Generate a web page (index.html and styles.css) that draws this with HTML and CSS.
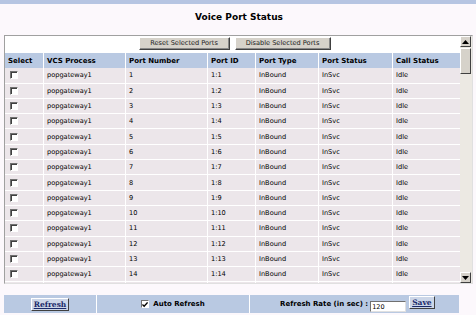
FILE: index.html
```html
<!DOCTYPE html>
<html>
<head>
<meta charset="utf-8">
<link rel="stylesheet" href="styles.css">
</head>
<body>
<div class="topbar"></div>
<h1 class="title">Voice Port Status</h1>
<div class="frame">
  <div class="content">
    <div class="btnrow">
      <button class="btn">Reset Selected Ports</button>
      <button class="btn">Disable Selected Ports</button>
    </div>
    <div class="grid" id="grid">
      <div class="hd">Select</div><div class="hd">VCS Process</div><div class="hd">Port Number</div><div class="hd">Port ID</div><div class="hd">Port Type</div><div class="hd">Port Status</div><div class="hd">Call Status</div>
      <div class="cb"><span class="box"></span></div><div>popgateway1</div><div>1</div><div>1:1</div><div>InBound</div><div>InSvc</div><div>Idle</div>
      <div class="cb"><span class="box"></span></div><div>popgateway1</div><div>2</div><div>1:2</div><div>InBound</div><div>InSvc</div><div>Idle</div>
      <div class="cb"><span class="box"></span></div><div>popgateway1</div><div>3</div><div>1:3</div><div>InBound</div><div>InSvc</div><div>Idle</div>
      <div class="cb"><span class="box"></span></div><div>popgateway1</div><div>4</div><div>1:4</div><div>InBound</div><div>InSvc</div><div>Idle</div>
      <div class="cb"><span class="box"></span></div><div>popgateway1</div><div>5</div><div>1:5</div><div>InBound</div><div>InSvc</div><div>Idle</div>
      <div class="cb"><span class="box"></span></div><div>popgateway1</div><div>6</div><div>1:6</div><div>InBound</div><div>InSvc</div><div>Idle</div>
      <div class="cb"><span class="box"></span></div><div>popgateway1</div><div>7</div><div>1:7</div><div>InBound</div><div>InSvc</div><div>Idle</div>
      <div class="cb"><span class="box"></span></div><div>popgateway1</div><div>8</div><div>1:8</div><div>InBound</div><div>InSvc</div><div>Idle</div>
      <div class="cb"><span class="box"></span></div><div>popgateway1</div><div>9</div><div>1:9</div><div>InBound</div><div>InSvc</div><div>Idle</div>
      <div class="cb"><span class="box"></span></div><div>popgateway1</div><div>10</div><div>1:10</div><div>InBound</div><div>InSvc</div><div>Idle</div>
      <div class="cb"><span class="box"></span></div><div>popgateway1</div><div>11</div><div>1:11</div><div>InBound</div><div>InSvc</div><div>Idle</div>
      <div class="cb"><span class="box"></span></div><div>popgateway1</div><div>12</div><div>1:12</div><div>InBound</div><div>InSvc</div><div>Idle</div>
      <div class="cb"><span class="box"></span></div><div>popgateway1</div><div>13</div><div>1:13</div><div>InBound</div><div>InSvc</div><div>Idle</div>
      <div class="cb"><span class="box"></span></div><div>popgateway1</div><div>14</div><div>1:14</div><div>InBound</div><div>InSvc</div><div>Idle</div>
      <div></div><div></div><div></div><div></div><div></div><div></div><div></div>
    </div>
  </div>
  <div class="scrollbar">
    <div class="arrow up"><svg width="7" height="4" viewBox="0 0 7 4"><path d="M3.5 0 L7 4 L0 4 Z" fill="#000"/></svg></div>
    <div class="track"><div class="thumb"></div></div>
    <div class="arrow down"><svg width="7" height="4" viewBox="0 0 7 4"><path d="M0 0 L7 0 L3.5 4 Z" fill="#000"/></svg></div>
  </div>
</div>
<div class="bottombar">
  <div class="bcell"><span class="linkbtn">Refresh</span></div>
  <div class="bcell"><span class="chk"><svg width="7" height="7" viewBox="0 0 7 7"><path d="M0.5 3.5 L2.5 5.5 L6.5 1" stroke="#000" stroke-width="1.6" fill="none"/></svg></span>Auto Refresh</div>
  <div class="bcell"><span>Refresh Rate (in sec) :</span><span class="input">120</span><span class="linkbtn save">Save</span></div>
</div>
</body>
</html>
```
FILE: styles.css
```css
html, body {
  margin: 0;
  padding: 0;
}
body {
  background: #fcf8fc;
  font-family: "DejaVu Sans", Verdana, sans-serif;
  width: 476px;
  height: 315px;
  overflow: hidden;
}
.topbar {
  height: 4px;
  background: #b6c5e2;
}
.title {
  margin: 8px 0 0 0;
  height: 11px;
  line-height: 11px;
  font-size: 9px;
  font-weight: bold;
  text-align: center;
  color: #000;
  padding-left: 2px;
}
.frame {
  margin: 12px 3px 0 4px;
  height: 247px;
  border: 1px solid #a0a0a0;
  border-right-color: #e0e0e0;
  border-bottom-color: #e0e0e0;
  display: flex;
  background: #fff;
}
.content {
  flex: 1;
  overflow: hidden;
  background: #fff;
  opacity: 0.999;
}
.btnrow {
  height: 15px;
  padding-top: 1px;
  display: flex;
  justify-content: center;
  gap: 5px;
  padding-left: 4px;
}
.btn {
  margin: 0;
  height: 13px;
  padding: 0 6px;
  font-family: "DejaVu Sans", Tahoma, sans-serif;
  font-size: 6.6px;
  line-height: 11px;
  color: #222;
  background: #d6d2ca;
  border: 1px solid;
  border-color: #fff #404040 #404040 #fff;
  box-shadow: inset -1px -1px 0 #888;
}
.btn:first-child {
  width: 91px;
}
.btn:last-child {
  width: 96px;
}
.grid {
  margin-top: 1px;
  display: grid;
  grid-template-columns: 38px 81px 81px 47px 62px 73px 1fr;
  grid-auto-rows: 14.3px;
  gap: 1px;
  background: #fff;
  font-size: 6.6px;
  color: #000;
}
.grid > div {
  background: #ece6ea;
  padding-left: 3px;
  display: flex;
  align-items: center;
  white-space: nowrap;
  overflow: hidden;
}
.grid > .hd {
  background: #b9c9e2;
  font-weight: bold;
  font-size: 7px;
  padding-left: 3px;
  height: 15.3px;
  align-self: start;
}
.grid > .cb {
  padding-left: 5px;
}
.box {
  width: 8px;
  height: 8px;
  box-sizing: border-box;
  border: 1px solid;
  border-color: #707070 #fff #fff #707070;
  background: #fff;
  box-shadow: inset 1px 1px 0 #404040;
}
.scrollbar {
  width: 12px;
  background: #ece9e3;
  display: flex;
  flex-direction: column;
}
.arrow {
  height: 11px;
  width: 11px;
  box-sizing: border-box;
  background: #d6d2ca;
  border: 1px solid;
  border-color: #fff #404040 #404040 #fff;
  display: flex;
  align-items: center;
  justify-content: center;
}
.track {
  flex: 1;
}
.thumb {
  margin-top: 1px;
  height: 26px;
  width: 11px;
  box-sizing: border-box;
  background: #d6d2ca;
  border: 1px solid;
  border-color: #fff #404040 #404040 #fff;
}
.bottombar {
  margin: 11px 0 0 4px;
  width: 455px;
  height: 18px;
  display: grid;
  grid-template-columns: 92px 152px 1fr;
  gap: 1px;
  background: #fff;
  font-size: 7px;
  font-weight: bold;
  opacity: 0.999;
}
.bcell {
  background: #b9c9e2;
  display: flex;
  align-items: center;
  justify-content: center;
}
.bcell:last-child {
  justify-content: flex-start;
  padding-left: 30px;
}
.linkbtn {
  text-decoration: underline;
  border: 1px solid;
  border-color: #fff #404040 #404040 #fff;
  background: #ccd6e8;
  padding: 1px 2px;
  color: #1a2a6a;
  font-family: "DejaVu Serif", serif;
  font-size: 7.5px;
}
.chk {
  width: 8px;
  height: 8px;
  box-sizing: border-box;
  border: 1px solid;
  border-color: #707070 #fff #fff #707070;
  background: #fff;
  margin-right: 4px;
  display: flex;
  align-items: center;
  justify-content: center;
}
.input {
  margin-left: 2px;
  width: 36px;
  height: 11px;
  box-sizing: border-box;
  background: #fff;
  border: 1px solid;
  border-color: #707070 #e0e0e0 #e0e0e0 #707070;
  font-weight: normal;
  font-size: 6.5px;
  line-height: 10px;
  padding-left: 1px;
  margin-top: 4px;
}
.save {
  margin-left: 3px;
  align-self: flex-start;
  margin-top: 1px;
}
```
